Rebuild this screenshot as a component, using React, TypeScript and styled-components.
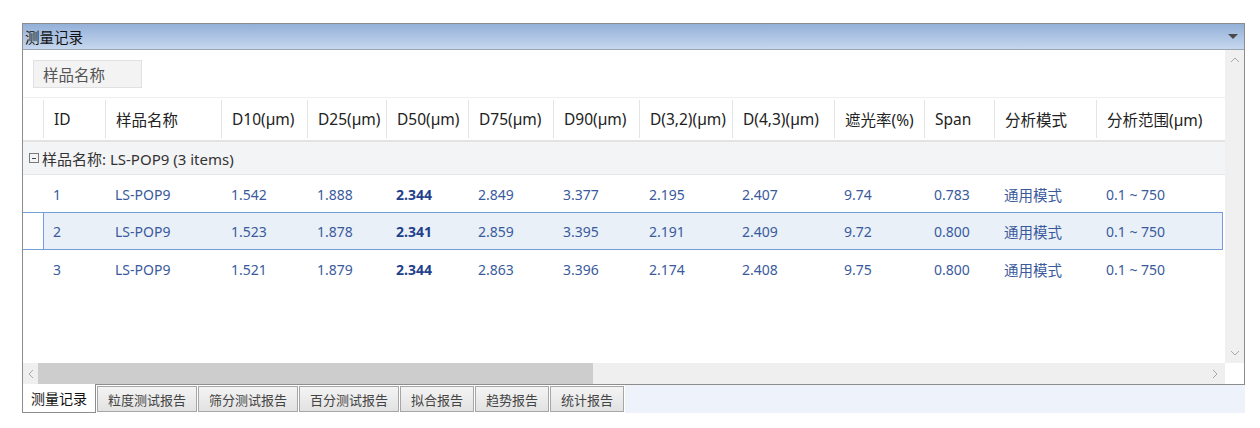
import styled, { createGlobalStyle } from "styled-components";

const GlobalStyle = createGlobalStyle`
  body {
    margin: 0;
    background: #ffffff;
    font-family: "Noto Sans", "Noto Sans CJK SC", sans-serif;
  }
`;

const COLS =
  "20px 62px 116px 86px 79px 82px 85px 86px 93px 102px 90px 70px 102px 123px";

const Wrapper = styled.div`
  padding: 23px 0 0 22px;
  width: 1223px;
`;

const Panel = styled.div`
  border: 1px solid #8d8d8d;
  background: #fff;
`;

const TitleBar = styled.div`
  height: 25px;
  display: flex;
  align-items: center;
  justify-content: space-between;
  padding: 0 6px 0 2px;
  background: linear-gradient(#93b0d8, #c6d7ee);
  border-bottom: 1px solid #9aa6b6;
  font-family: "Noto Sans CJK SC", sans-serif;
  font-size: 14.5px;
  color: #111;
`;

const Caret = styled.span`
  width: 0;
  height: 0;
  border-left: 5px solid transparent;
  border-right: 5px solid transparent;
  border-top: 5px solid #4a4a4a;
`;

const Body = styled.div`
  display: grid;
  grid-template-columns: 1fr 19px;
  grid-template-rows: 313px 21px;
`;

const Content = styled.div`
  overflow: hidden;
`;

const GroupPanel = styled.div`
  height: 47px;
  padding: 10px 0 0 10px;
  box-sizing: border-box;
`;

const GroupButton = styled.div`
  width: 109px;
  height: 28px;
  box-sizing: border-box;
  background: #f3f3f3;
  border: 1px solid #e1e1e1;
  padding-left: 9px;
  display: flex;
  align-items: center;
  font-family: "Noto Sans CJK SC", sans-serif;
  font-size: 15.5px;
  color: #555;
`;

const HeaderRow = styled.div`
  display: grid;
  grid-template-columns: ${COLS};
  height: 45px;
  border-top: 1px solid #eeeeee;
  border-bottom: 2px solid #e3e3e3;
  box-sizing: border-box;
  align-items: center;
`;

const HeaderCell = styled.div<{ $first?: boolean }>`
  height: 38px;
  display: flex;
  align-items: center;
  padding-left: 10px;
  border-left: ${(p) => (p.$first ? "none" : "1px solid #e4e4e4")};
  font-size: 15.5px;
  color: #222;
  white-space: nowrap;
`;

const GroupRow = styled.div`
  height: 32px;
  display: flex;
  align-items: center;
  gap: 2px;
  padding-left: 6px;
  background: #f3f4f6;
  border-bottom: 1px solid #e6e6e6;
  font-size: 15px;
  color: #333;
`;

const Toggle = styled.span`
  width: 8px;
  height: 8px;
  border: 1px solid #7a7a7a;
  position: relative;
  margin-right: 1px;
  &::after {
    content: "";
    position: absolute;
    left: 2px;
    right: 2px;
    top: 3.5px;
    height: 1px;
    background: #444;
  }
`;

const DataRow = styled.div<{ $selected?: boolean }>`
  display: grid;
  grid-template-columns: ${COLS};
  height: 38px;
  box-sizing: border-box;
  align-items: center;
  width: 1200px;
  margin-top: ${(p) => (p.$selected ? "-1px" : "0")};
  border: 1px solid ${(p) => (p.$selected ? "#72a0d6" : "transparent")};
  border-left: none;
  background: ${(p) =>
    p.$selected
      ? "linear-gradient(to right, transparent 20px, #e9f0f8 20px)"
      : "transparent"};
  position: relative;
  &::before {
    content: "";
    display: ${(p) => (p.$selected ? "block" : "none")};
    position: absolute;
    left: 20px;
    top: -1px;
    bottom: -1px;
    width: 1px;
    background: #72a0d6;
  }
`;

const Cell = styled.div<{ $bold?: boolean }>`
  padding-left: 10px;
  font-size: 14px;
  font-weight: ${(p) => (p.$bold ? 700 : 400)};
  color: ${(p) => (p.$bold ? "#22418a" : "#3a5a9c")};
  white-space: nowrap;
`;

const CjkCell = styled(Cell)`
  font-family: "Noto Sans CJK SC", sans-serif;
  font-size: 14.5px;
`;

const VScroll = styled.div`
  background: #f0f0f0;
  display: flex;
  flex-direction: column;
  justify-content: space-between;
  align-items: center;
  padding: 6px 0;
  box-sizing: border-box;
`;

const HScroll = styled.div`
  background: #efefef;
  display: flex;
  align-items: center;
  padding: 0 6px 0 4px;
  gap: 3px;
`;

const Thumb = styled.div`
  width: 555px;
  height: 21px;
  background: #cdcdcd;
`;

const Spacer = styled.div`
  flex: 1;
`;

const Corner = styled.div`
  background: #fff;
`;

const TabStrip = styled.div`
  display: flex;
  height: 28px;
`;

const TabFill = styled.div`
  flex: 1;
  height: 28px;
  background: #eef2fb;
`;

const Tab = styled.div<{ $active?: boolean }>`
  height: ${(p) => (p.$active ? "29px" : "26px")};
  margin-top: ${(p) => (p.$active ? "-1px" : "1px")};
  padding: 0 ${(p) => (p.$active ? "8px" : "10px")};
  box-sizing: border-box;
  display: flex;
  align-items: center;
  border: 1px solid ${(p) => (p.$active ? "#8d8d8d" : "#a6a6a6")};
  border-top: ${(p) => (p.$active ? "none" : "1px solid #a6a6a6")};
  margin-right: 1px;
  background: ${(p) =>
    p.$active ? "#ffffff" : "linear-gradient(#f4f4f4, #e2e2e2)"};
  font-family: "Noto Sans CJK SC", sans-serif;
  font-size: ${(p) => (p.$active ? "14px" : "13px")};
  color: ${(p) => (p.$active ? "#111" : "#444")};
`;

const Chevron = ({ dir }: { dir: "up" | "down" | "left" | "right" }) => {
  const paths = {
    up: "M1 6 L5 2 L9 6",
    down: "M1 2 L5 6 L9 2",
    left: "M6 1 L2 5 L6 9",
    right: "M2 1 L6 5 L2 9",
  };
  const vertical = dir === "up" || dir === "down";
  return (
    <svg
      width={vertical ? 10 : 8}
      height={vertical ? 8 : 10}
      viewBox={vertical ? "0 0 10 8" : "0 0 8 10"}
    >
      <path d={paths[dir]} fill="none" stroke="#a8a8a8" strokeWidth="1" />
    </svg>
  );
};

const headers = [
  "",
  "ID",
  "样品名称",
  "D10(µm)",
  "D25(µm)",
  "D50(µm)",
  "D75(µm)",
  "D90(µm)",
  "D(3,2)(µm)",
  "D(4,3)(µm)",
  "遮光率(%)",
  "Span",
  "分析模式",
  "分析范围(µm)",
];

const rows = [
  ["1", "LS-POP9", "1.542", "1.888", "2.344", "2.849", "3.377", "2.195", "2.407", "9.74", "0.783", "通用模式", "0.1 ~ 750"],
  ["2", "LS-POP9", "1.523", "1.878", "2.341", "2.859", "3.395", "2.191", "2.409", "9.72", "0.800", "通用模式", "0.1 ~ 750"],
  ["3", "LS-POP9", "1.521", "1.879", "2.344", "2.863", "3.396", "2.174", "2.408", "9.75", "0.800", "通用模式", "0.1 ~ 750"],
];

const tabs = ["测量记录", "粒度测试报告", "筛分测试报告", "百分测试报告", "拟合报告", "趋势报告", "统计报告"];

export default function App() {
  return (
    <Wrapper>
      <GlobalStyle />
      <Panel>
        <TitleBar>
          <span>测量记录</span>
          <Caret />
        </TitleBar>
        <Body>
          <Content>
            <GroupPanel>
              <GroupButton>样品名称</GroupButton>
            </GroupPanel>
            <HeaderRow>
              {headers.map((h, i) => (
                <HeaderCell key={i} $first={i === 0}>
                  {h}
                </HeaderCell>
              ))}
            </HeaderRow>
            <GroupRow>
              <Toggle />
              <span>样品名称: LS-POP9 (3 items)</span>
            </GroupRow>
            {rows.map((r, i) => (
              <DataRow key={i} $selected={i === 1}>
                <div />
                {r.map((v, j) =>
                  j === 11 ? (
                    <CjkCell key={j}>{v}</CjkCell>
                  ) : (
                    <Cell key={j} $bold={j === 4}>
                      {v}
                    </Cell>
                  )
                )}
              </DataRow>
            ))}
          </Content>
          <VScroll>
            <Chevron dir="up" />
            <Chevron dir="down" />
          </VScroll>
          <HScroll>
            <Chevron dir="left" />
            <Thumb />
            <Spacer />
            <Chevron dir="right" />
          </HScroll>
          <Corner />
        </Body>
      </Panel>
      <TabStrip>
        {tabs.map((t, i) => (
          <Tab key={t} $active={i === 0}>
            {t}
          </Tab>
        ))}
        <TabFill />
      </TabStrip>
    </Wrapper>
  );
}
